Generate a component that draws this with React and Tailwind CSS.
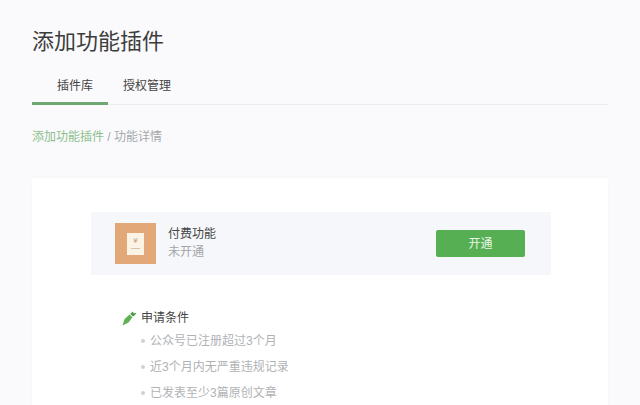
const FONT = "font-['Liberation_Sans','Noto_Sans_CJK_SC',sans-serif]";

const conditions = ["公众号已注册超过3个月", "近3个月内无严重违规记录", "已发表至少3篇原创文章"];

const FeatureIcon = () => (
  <div className="flex h-[41px] w-[41px] shrink-0 items-center justify-center bg-[#e3a878]">
    <div className="flex h-[22px] w-[17px] flex-col items-center bg-[#fbf3e6] pt-[3px]">
      <span className="text-[8px] leading-[9px] text-[#c9a27e]">¥</span>
      <div className="mt-[3px] h-px w-[9px] bg-[#d9c3a8]" />
    </div>
  </div>
);

const PencilIcon = () => (
  <svg width="15" height="15" viewBox="0 0 15 15" className="shrink-0">
    <path d="M0.5 14.5 L2.6 8 L7.6 3.4 L10.4 6.2 L6.6 11.4 Z" fill="#5cb254" />
    <path d="M8.2 2.8 L11 0.6 L11.5 2.2 L14.4 2 L12.6 4.4 L10.9 5.6 Z" fill="#4c9c45" />
  </svg>
);

const App = () => {
  return (
    <div className={`h-[405px] w-[640px] overflow-hidden bg-[#fafafc] px-8 pt-[27px] ${FONT}`}>
      <h1 className="text-[22px] font-normal leading-[30px] text-[#3d3d3d]">添加功能插件</h1>

      <div className="mt-[16px] flex h-[32px] border-b border-[#ececee]">
        <div className="h-[32px] w-[76px] border-b-[3px] border-[#6fa873] pl-[25px] pt-[5px] text-[12px] leading-[16px] text-[#444444]">
          插件库
        </div>
        <div className="ml-[15px] pt-[5px] text-[12px] leading-[16px] text-[#444444]">授权管理</div>
      </div>

      <div className="mt-[24px] text-[12px] leading-[16px] text-[#a6a8ab]">
        <span className="text-[#8cc08c]">添加功能插件</span> / 功能详情
      </div>

      <div className="mt-[33px] h-[300px] rounded-[2px] bg-white pl-[59px] pr-[57px] pt-[34px] shadow-[0_0_6px_rgba(0,0,0,0.02)]">
        <div className="flex h-[63px] items-center bg-[#f6f7fb] pl-[24px] pr-[26px]">
          <FeatureIcon />
          <div className="ml-[12px] flex-1 pb-[2px]">
            <div className="text-[12px] leading-[18px] text-[#444444]">付费功能</div>
            <div className="text-[12px] leading-[18px] text-[#a3a5a8]">未开通</div>
          </div>
          <button className="h-[27px] w-[89px] rounded-[2px] bg-[#56af52] text-[12px] text-[#eaf5e8]">开通</button>
        </div>

        <div className="ml-[31px] mt-[35px]">
          <div className="flex h-[16px] items-center gap-[4px]">
            <PencilIcon />
            <span className="text-[12px] leading-[16px] text-[#444444]">申请条件</span>
          </div>
          <ul className="mt-[2px]">
            {conditions.map((item) => (
              <li key={item} className="flex h-[26px] items-center pl-[19px] text-[12px] text-[#b0b2b5]">
                <span className="mr-[5px] h-[4px] w-[4px] rounded-full bg-[#cfd1d3]" />
                {item}
              </li>
            ))}
          </ul>
        </div>
      </div>
    </div>
  );
};

export default App;
